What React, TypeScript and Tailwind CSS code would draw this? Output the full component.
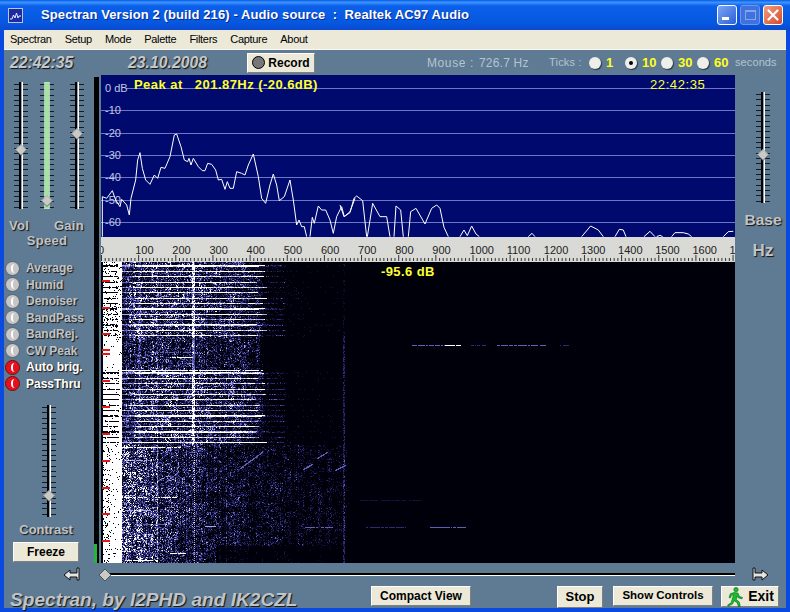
const SANS = "font-['Liberation_Sans',Arial,sans-serif]";

// spectrum trace, traced off the picture at 3x and scaled back down in the svg
const traceA = "22,320 22,200 35,205 52,182 62,210 75,230 80,208 95,225 103,255 108,205 122,150 128,90 135,68 142,115 152,150 165,163 178,135 188,145 198,112 210,115 225,80 238,15 245,12 258,50 268,90 278,95 282,85 288,105 295,85 310,110 322,122 330,122 338,100 350,103 362,120 370,150 380,148 390,178 397,155 405,175 415,175 425,125 440,130 450,135 460,105 475,72 490,140 500,205 512,220 525,165 535,132 545,165 553,212 568,200 585,150 595,210 605,285 612,270 620,290 628,290 635,320";
const traceB = "645,320 652,262 658,280 670,228 680,240 692,240 705,270 715,310 725,260 740,230 748,260 765,245 780,205";
const traceC = [
  "0,105 12,140 30,128 42,85 50,78 68,92 80,200",
  "82,200 98,100 120,140 140,140 150,200",
  "162,200 168,108 182,120 190,200",
  "205,200 212,125 228,115 255,162 275,115 290,105 300,115 312,172 325,200",
  "360,200 372,180 382,197 395,168 408,192 418,200",
  "565,200 576,190 585,200",
  "725,200 752,168 775,180 790,200",
  "825,200 838,178 850,180 858,200",
  "912,200 930,184 945,200",
  "950,200 960,196 968,200",
  "995,200 1005,188 1030,188 1045,192 1055,200",
  "1150,200 1165,185 1180,184",
];

const gridLines = [
  { y: 88, label: "0 dB" },
  { y: 110, label: "-10" },
  { y: 133, label: "-20" },
  { y: 155, label: "-30" },
  { y: 177, label: "-40" },
  { y: 200, label: "-50" },
  { y: 222, label: "-60" },
];

const filters = [
  { name: "Average", on: false },
  { name: "Humid", on: false },
  { name: "Denoiser", on: false },
  { name: "BandPass", on: false },
  { name: "BandRej.", on: false },
  { name: "CW Peak", on: false },
  { name: "Auto brig.", on: true },
  { name: "PassThru", on: true },
];

const menus = ["Spectran", "Setup", "Mode", "Palette", "Filters", "Capture", "About"];

const ticks = [
  { label: "1", w: "w-[36px]", checked: false },
  { label: "10", w: "w-[36px]", checked: true },
  { label: "30", w: "w-[36px]", checked: false },
  { label: "60", w: "w-[38px]", checked: false },
];

const upperEnv: [number, number][] = [[122, 0.22], [135, 0.42], [190, 0.32], [258, 0.2], [264, 0.05], [300, 0.03], [345, 0.015], [420, 0.008], [735, 0.003]];
const lowerEnv: [number, number][] = [[122, 0.68], [150, 0.5], [160, 0.3], [190, 0.22], [240, 0.13], [345, 0.07], [350, 0.015], [735, 0.006]];

function envelope(table: [number, number][], x: number) {
  for (let i = 1; i < table.length; i++) {
    if (x <= table[i][0]) {
      const [x0, v0] = table[i - 1];
      const [x1, v1] = table[i];
      return v0 + ((x - x0) / (x1 - x0)) * (v1 - v0);
    }
  }
  return 0;
}

// white dashes in the lower half: y, x from, x to, level
const dashes = [
  [447, 122, 180, 0.9], [497, 124, 146, 0.9], [497, 155, 178, 0.9], [560, 125, 152, 1],
  [553, 170, 185, 0.7], [510, 125, 150, 0.5], [526, 205, 215, 0.5], [527, 305, 332, 0.3],
  [524, 137, 170, 0.4], [460, 125, 150, 0.45], [345, 412, 445, 0.3], [345, 445, 460, 0.7],
  [345, 471, 485, 0.18], [345, 497, 545, 0.28], [345, 560, 568, 0.15], [370, 122, 262, 1],
  [357, 170, 192, 0.9], [352, 150, 190, 0.4], [527, 365, 405, 0.2], [527, 430, 465, 0.3],
  [500, 360, 420, 0.1],
];
// faint diagonals: x0, y0, x1, y1
const diagonals = [
  [303, 469, 312, 464], [317, 458, 327, 452], [335, 470, 345, 465], [240, 468, 262, 452], [165, 482, 178, 472],
];

// seeded noise so the waterfall comes out the same on every load
function makeWaterfall() {
  let seed = 12345;
  const rnd = () => {
    seed = (seed * 1664525 + 1013904223) >>> 0;
    return seed / 4294967296;
  };
  const levels = ["", "", "", "", ""];

  // coarse patches keep the noise from looking uniform
  const patch: number[][] = [];
  for (let i = 0; i < 61; i++) {
    const row: number[] = [];
    for (let j = 0; j < 91; j++) row.push(0.45 + rnd() * 0.95);
    patch.push(row);
  }
  const colBoost: number[] = [];
  for (let x = 0; x < 634; x++) colBoost.push(0.6 + rnd() * 0.8);

  for (let r = 0; r < 301; r++) {
    const y = r + 262;
    const upper = y < 445;
    const inGap = y > 337 && y < 370;
    const phase = (y - 265 + 535) % 5.35;
    const isStripe = upper && !inGap && phase < 1.25;
    const rowLevel = 0.75 + rnd() * 0.4;
    const stripeReach = 255 + rnd() * 12;
    let segLevel = 1;

    for (let c = 2; c < 634; c++) {
      const x = c + 101;
      let v = 0;
      if (c % 7 === 0) segLevel = 0.55 + rnd() * 0.7;

      if (x < 122) {
        let dark = false;
        if (y < 338) dark = isStripe ? x < 118 && rnd() < 0.8 : rnd() < 0.1;
        else if (upper) dark = isStripe && x < 119 ? rnd() < 0.85 : rnd() < 0.03;
        else dark = rnd() < (x < 110 ? 0.16 : 0.035);
        v = dark ? 0 : 1;
      } else {
        const e = envelope(upper ? upperEnv : lowerEnv, x);
        const p = patch[Math.floor(r / 5)][Math.floor(c / 7)];
        v = e * p * colBoost[c] * rnd() * rnd() * 2.2;
        if (inGap) v *= x < 260 ? 0.8 : 0.5;
        if (!upper && y > 545 && x > 215) v *= 0.35;

        if (isStripe) {
          if (x < 135) v += 0.35 * segLevel * rowLevel;
          else if (x < stripeReach) v += (x < 200 ? 0.95 : 0.75) * segLevel * rowLevel;
          else if (x < 285) v += 0.2 * segLevel * segLevel * rnd();
          else if (x < 345 && rnd() < 0.06) v += 0.09;
        }

        if (x >= 138 && x <= 140) v += upper ? 0.2 * rnd() : 0;
        if (x === 157) v += upper ? 0.1 : 0.32 * rnd() + 0.08;
        if (x >= 192 && x <= 194 && upper) v += inGap ? 0.22 : isStripe || rnd() < 0.55 ? 0.8 : 0.2;
        if (x === 194 && !upper && r % 2 === 0) v += 0.5;
        if (x === 186 && !upper) v += 0.15 * rnd();
        if (x === 343 || x === 344) v += y > 330 ? 0.2 * rnd() : 0.08 * rnd();

        for (const d of dashes) {
          if (y === d[0] && x >= d[1] && x <= d[2] && (d[3] > 0.45 ? rnd() < 0.9 : rnd() < 0.8)) v = Math.max(v, d[3]);
        }
        for (const d of diagonals) {
          if (x >= d[0] && x <= d[2]) {
            const yy = d[1] + ((x - d[0]) / (d[2] - d[0])) * (d[3] - d[1]);
            if (Math.abs(yy - y) < 0.8) v = Math.max(v, 0.3);
          }
        }
      }
      if (v < 0.07) continue;
      const idx = v > 0.68 ? 0 : v > 0.42 ? 1 : v > 0.25 ? 2 : v > 0.14 ? 3 : 4;
      levels[idx] += `M${c} ${r + 0.5}h1`;
    }
  }
  return levels;
}

const waterfall = makeWaterfall();
const waterfallColors = ["#ffffff", "#a9a9ea", "#5f5fb8", "#2c2c78", "#12123a"];
const redTicks = [280, 307, 333, 349, 353, 380, 406, 433, 460, 487, 513, 540];

function VSlider({ height, thumb, green = false }: { height: number; thumb: number; green?: boolean }) {
  const rows = [];
  for (let y = 2; y < height; y += 5.33) rows.push(Math.round(y));
  return (
    <svg width={24} height={height} className="block shrink-0">
      {rows.map((y) => (
        <path key={y} d={`M5 ${y + 0.5}h5M14 ${y + 0.5}h5`} stroke="#141c26" strokeWidth={1} />
      ))}
      {green ? (
        <rect x={9.5} y={0} width={5} height={height} fill="#a5e3a0" stroke="#e8f2e6" strokeWidth={0.5} />
      ) : (
        <>
          <rect x={10} y={0} width={2.5} height={height} fill="#000" />
          <rect x={12.5} y={0} width={1.5} height={height} fill="#fff" />
        </>
      )}
      <path d={`M12 ${thumb - 5.5}l5.5 5.5l-5.5 5.5l-5.5-5.5z`} fill="#c9c9c5" stroke="#3a3a3a" strokeWidth={0.7} />
      <path d={`M6.5 ${thumb}l5.5-5.5l5.5 5.5`} fill="none" stroke="#f4f4f4" strokeWidth={0.8} />
    </svg>
  );
}

function XpButton({ children, className }: { children: React.ReactNode; className: string }) {
  return (
    <button
      className={`flex items-center justify-center bg-[#ece9d8] border-t border-l border-t-white border-l-white border-r border-b border-r-[#808080] border-b-[#808080] font-bold text-black ${className}`}
    >
      {children}
    </button>
  );
}

function ArrowIcon({ flip = false }: { flip?: boolean }) {
  return (
    <svg width={18} height={16} viewBox="0 0 18 16" className={flip ? "-scale-x-100" : ""}>
      <path d="M1 8l6-5v3h7V1h2v12h-2v-3H7v3z" fill="#e4e4e0" stroke="#111" strokeWidth={1} />
    </svg>
  );
}

function RunnerIcon() {
  return (
    <svg width={18} height={20} viewBox="0 0 18 20">
      <circle cx={10} cy={2.6} r={2.2} fill="#12c02c" stroke="#06500f" strokeWidth={0.5} />
      <path
        d="M8 5.5l4 .5l1.5 3.5l3 1l-.6 1.4l-3.8-1.2l-1-1.6l-.8 3.4l3 2.6l1 4.4l-1.8.4l-1.2-4l-3.2-2.2l-1.6 3.4l-4.2 2.2l-.8-1.3l3.6-2.2l1.6-5.2l.6-3l-1.8.6l-1 2.8l-1.5-.5l1.3-3.8z"
        fill="#12c02c"
        stroke="#06500f"
        strokeWidth={0.5}
      />
    </svg>
  );
}

export default function App() {
  const hzTicks = [];
  for (let i = 0; i <= 171; i++) hzTicks.push(i);

  return (
    <div className={`w-[790px] h-[612px] overflow-hidden flex flex-col bg-[#0a4ae0] ${SANS}`}>
      {/* title bar */}
      <div className="h-[30px] shrink-0 flex items-center pl-[8px] pr-[7px] bg-[linear-gradient(180deg,#0a5ce6_0%,#3a93ff_8%,#0c5fe8_20%,#0558e0_75%,#0a4ad0_100%)]">
        <svg width={15} height={15} viewBox="0 0 15 15" className="shrink-0">
          <rect x={0.5} y={0.5} width={14} height={14} fill="#1c2ba0" stroke="#b8c4e8" />
          <path d="M2 11h2l1.5-4l1.5 3l1.5-5l1.5 5l1-2h2" fill="none" stroke="#e8eefc" strokeWidth={1} />
        </svg>
        <span className="ml-[18px] text-white font-bold text-[13px] tracking-[0.1px] whitespace-pre [text-shadow:1px_1px_0_#0a2a90]">
          {"Spectran Version 2 (build 216) - Audio source  :  Realtek AC97 Audio"}
        </span>
        <div className="ml-auto flex gap-[3px]">
          <div className="w-[20px] h-[20px] rounded-[3px] border border-white bg-[linear-gradient(135deg,#7ea6f5,#2a5fd8)] flex items-end pl-[4px] pb-[4px]">
            <div className="w-[7px] h-[3px] bg-white" />
          </div>
          <div className="w-[20px] h-[20px] rounded-[3px] border border-[#6f95e8] bg-[#3f72de] flex items-center justify-center">
            <div className="w-[11px] h-[10px] border border-[#86a6ea] border-t-2" />
          </div>
          <div className="w-[20px] h-[20px] rounded-[3px] border border-white bg-[linear-gradient(135deg,#f0a080,#d8482a)] flex items-center justify-center">
            <svg width={12} height={12} viewBox="0 0 12 12">
              <path d="M1.5 1.5l9 9M10.5 1.5l-9 9" stroke="#fff" strokeWidth={2.2} strokeLinecap="round" />
            </svg>
          </div>
        </div>
      </div>

      <div className="flex-1 mx-[4px] mb-[4px] flex flex-col bg-[#5f7a93] min-h-0">
        {/* menu */}
        <div className="h-[20px] shrink-0 flex items-center pl-[6px] gap-[13px] bg-[#ece9d8] border-b border-b-[#f8f8f4] text-[11px] tracking-[-0.3px] text-black">
          {menus.map((m) => (
            <span key={m}>{m}</span>
          ))}
        </div>

        {/* status strip */}
        <div className="h-[25px] shrink-0 flex items-center pl-[6px] text-[#b4c4d2]">
          <span className="w-[118px] text-[15.8px] font-bold italic text-[#c3c8cc] [text-shadow:1px_1px_1px_#111]">22:42:35</span>
          <span className="w-[119px] text-[15.8px] font-bold italic text-[#c3c8cc] [text-shadow:1px_1px_1px_#111]">23.10.2008</span>
          <XpButton className="w-[68px] h-[20px] gap-[3px] text-[12px]">
            <span className="w-[13px] h-[13px] rounded-full border border-black bg-[#777]" />
            Record
          </XpButton>
          <span className="ml-[112px] w-[52px] text-[12px] tracking-[0.6px]">Mouse :</span>
          <span className="w-[70px] text-[12px] tracking-[0.2px]">726.7 Hz</span>
          <span className="w-[40px] text-[11px] tracking-[0.2px]">Ticks :</span>
          {ticks.map((t) => (
            <span key={t.label} className={`${t.w} flex items-center`}>
              <span className="w-[12px] h-[12px] rounded-full bg-[#eeeeea] flex items-center justify-center shrink-0 shadow-[1px_1px_1px_#2a3a4a]">
                {t.checked && <span className="w-[4px] h-[4px] rounded-full bg-black" />}
              </span>
              <span className="ml-[5px] text-[13px] font-bold text-[#ffff20]">{t.label}</span>
            </span>
          ))}
          <span className="text-[11px] tracking-[0.1px]">seconds</span>
        </div>

        {/* main row */}
        <div className="h-[490px] shrink-0 flex">
          {/* left controls */}
          <div className="w-[90px] shrink-0 flex flex-col">
            <div className="flex pt-[7px] pl-[5px]">
              <VSlider height={127} thumb={68} />
              <div className="ml-[2px]">
                <VSlider height={127} thumb={119} green />
              </div>
              <div className="ml-[6px]">
                <VSlider height={127} thumb={52} />
              </div>
            </div>
            <div className="mt-[9px] flex justify-between pl-[5px] pr-[10px] text-[13px] leading-[15px] font-bold text-[#c0c4c8] [text-shadow:1px_1px_1px_#111] tracking-[0.3px]">
              <span>Vol</span>
              <span>Gain</span>
            </div>
            <div className="text-center pr-[4px] text-[13px] leading-[15px] font-bold text-[#c0c4c8] [text-shadow:1px_1px_1px_#111] tracking-[0.3px]">
              Speed
            </div>
            <div className="mt-[12px] pl-[1px] flex flex-col">
              {filters.map((f) => (
                <div key={f.name} className="h-[16.5px] flex items-center">
                  <span
                    className={`w-[15px] h-[15px] shrink-0 rounded-full border flex items-center justify-center ${
                      f.on ? "bg-[#e8101c] border-[#701010]" : "bg-[#c6c6c6] border-[#54606c]"
                    }`}
                  >
                    <span className="w-[4px] h-[9px] rounded-l-full border-l-2 border-l-white" />
                  </span>
                  <span
                    className={`ml-[6px] text-[12px] font-bold whitespace-nowrap [text-shadow:1px_1px_1px_#111] ${
                      f.on ? "text-white" : "text-[#c0c4c8]"
                    }`}
                  >
                    {f.name}
                  </span>
                </div>
              ))}
            </div>
            <div className="mt-[13px] flex justify-center">
              <VSlider height={112} thumb={91} />
            </div>
            <div className="mt-[5px] pr-[6px] text-center text-[13px] leading-[15px] font-bold text-[#c0c4c8] [text-shadow:1px_1px_1px_#111]">
              Contrast
            </div>
            <XpButton className="ml-[9px] mt-[5px] w-[66px] h-[20px] text-[12px]">Freeze</XpButton>
          </div>

          {/* level bar */}
          <div className="w-[5px] shrink-0 mt-[2px] mb-[2px] bg-black flex items-end">
            <div className="w-[3px] h-[19px] bg-[#22b83c]" />
          </div>
          <div className="w-[2px] shrink-0" />

          {/* display */}
          <div className="w-[634px] shrink-0 flex flex-col">
            <div className="relative h-[162px] bg-[#000a6e]">
              <svg width={634} height={162} viewBox="101 75 634 162" className="block">
                {gridLines.map((g) => (
                  <g key={g.y}>
                    <line x1={g.label === "0 dB" ? 126 : 101} x2={735} y1={g.y + 0.5} y2={g.y + 0.5} stroke="#6f76c4" />
                    <text x={105} y={g.y + 4} fontSize={11} fill="#c3c6e4" fontFamily="Liberation Sans">
                      {g.label}
                    </text>
                  </g>
                ))}
                <g transform="translate(95 130) scale(0.3333)" fill="none" stroke="#fff">
                  <polyline points={traceA} vectorEffect="non-scaling-stroke" strokeWidth={1} />
                  <polyline points={traceB} vectorEffect="non-scaling-stroke" strokeWidth={1} />
                </g>
                <g transform="translate(340 170) scale(0.3333)" fill="none" stroke="#fff">
                  {traceC.map((p) => (
                    <polyline key={p} points={p} vectorEffect="non-scaling-stroke" strokeWidth={1} />
                  ))}
                </g>
              </svg>
              <span className="absolute left-[33px] top-0 text-[13px] font-bold tracking-[0.45px] text-[#ffff30] whitespace-pre">
                {"Peak at   201.87Hz (-20.6dB)"}
              </span>
              <span className="absolute left-[549px] top-0 text-[13px] text-[#ffff30] tracking-[0.6px]">22:42:35</span>
            </div>

            {/* hz ruler */}
            <svg width={634} height={25} viewBox="0 0 634 25" className="block shrink-0 bg-[#d9d9d5]">
              {hzTicks.map((i) => (
                <line
                  key={i}
                  x1={i * 3.715 + 0.5}
                  x2={i * 3.715 + 0.5}
                  y1={i % 10 === 0 ? 18 : 21}
                  y2={24}
                  stroke="#333"
                />
              ))}
              {Array.from({ length: 18 }, (_, i) => (
                <text key={i} x={i * 37.15 - 3} y={17} fontSize={11} fill="#222" fontFamily="Liberation Sans">
                  {i * 100}
                </text>
              ))}
            </svg>

            {/* waterfall */}
            <div className="relative h-[301px] bg-[#00000a]">
              <svg width={634} height={301} viewBox="0 0 634 301" className="block" shapeRendering="crispEdges">
                {waterfall.map((d, i) => (
                  <path key={i} d={d} stroke={waterfallColors[i]} strokeWidth={1} fill="none" />
                ))}
                {redTicks.map((y) => (
                  <rect key={y} x={1} y={y - 262} width={8} height={2} fill="#e01818" />
                ))}
              </svg>
              <span className="absolute left-[280px] top-0 text-[13px] font-bold tracking-[0.4px] text-[#ffff30]">-95.6 dB</span>
            </div>
          </div>

          {/* right controls */}
          <div className="flex-1 flex flex-col items-center pl-[5px]">
            <div className="mt-[17px]">
              <VSlider height={111} thumb={63} />
            </div>
            <div className="mt-[9px] text-[15.5px] leading-[15px] font-bold text-[#c0c4c8] [text-shadow:1px_1px_1px_#111]">Base</div>
            <div className="mt-[16px] text-[17px] leading-[15px] font-bold text-[#c0c4c8] [text-shadow:1px_1px_1px_#111]">Hz</div>
          </div>
        </div>

        {/* scroll slider row */}
        <div className="h-[19px] shrink-0 flex items-center">
          <div className="ml-[59px] w-[38px]">
            <ArrowIcon />
          </div>
          <div className="relative w-[634px] h-[12px] flex items-center">
            <div className="w-full h-[3px] border-t-2 border-t-black bg-white" />
            <svg width={14} height={14} viewBox="0 0 14 14" className="absolute -left-[3px] top-[-1px]">
              <path d="M7 1l6 6l-6 6l-6-6z" fill="#c9c9c5" stroke="#333" strokeWidth={0.7} />
            </svg>
          </div>
          <div className="ml-[16px]">
            <ArrowIcon flip />
          </div>
        </div>

        {/* bottom row */}
        <div className="flex-1 flex items-start pl-[6px] pt-[2px]">
          <span className="w-[361px] self-center text-[19.1px] font-bold italic whitespace-nowrap text-[#bfc4c9] [text-shadow:1px_1px_1px_#111]">
            Spectran, by I2PHD and IK2CZL
          </span>
          <XpButton className="w-[100px] h-[20px] text-[12px]">Compact View</XpButton>
          <XpButton className="ml-[86px] w-[46px] h-[22px] text-[13px]">Stop</XpButton>
          <XpButton className="ml-[10px] w-[100px] h-[20px] text-[11.5px]">Show Controls</XpButton>
          <XpButton className="ml-[8px] w-[58px] h-[21px] gap-[4px] text-[14px]">
            <RunnerIcon />
            Exit
          </XpButton>
        </div>
      </div>
    </div>
  );
}
